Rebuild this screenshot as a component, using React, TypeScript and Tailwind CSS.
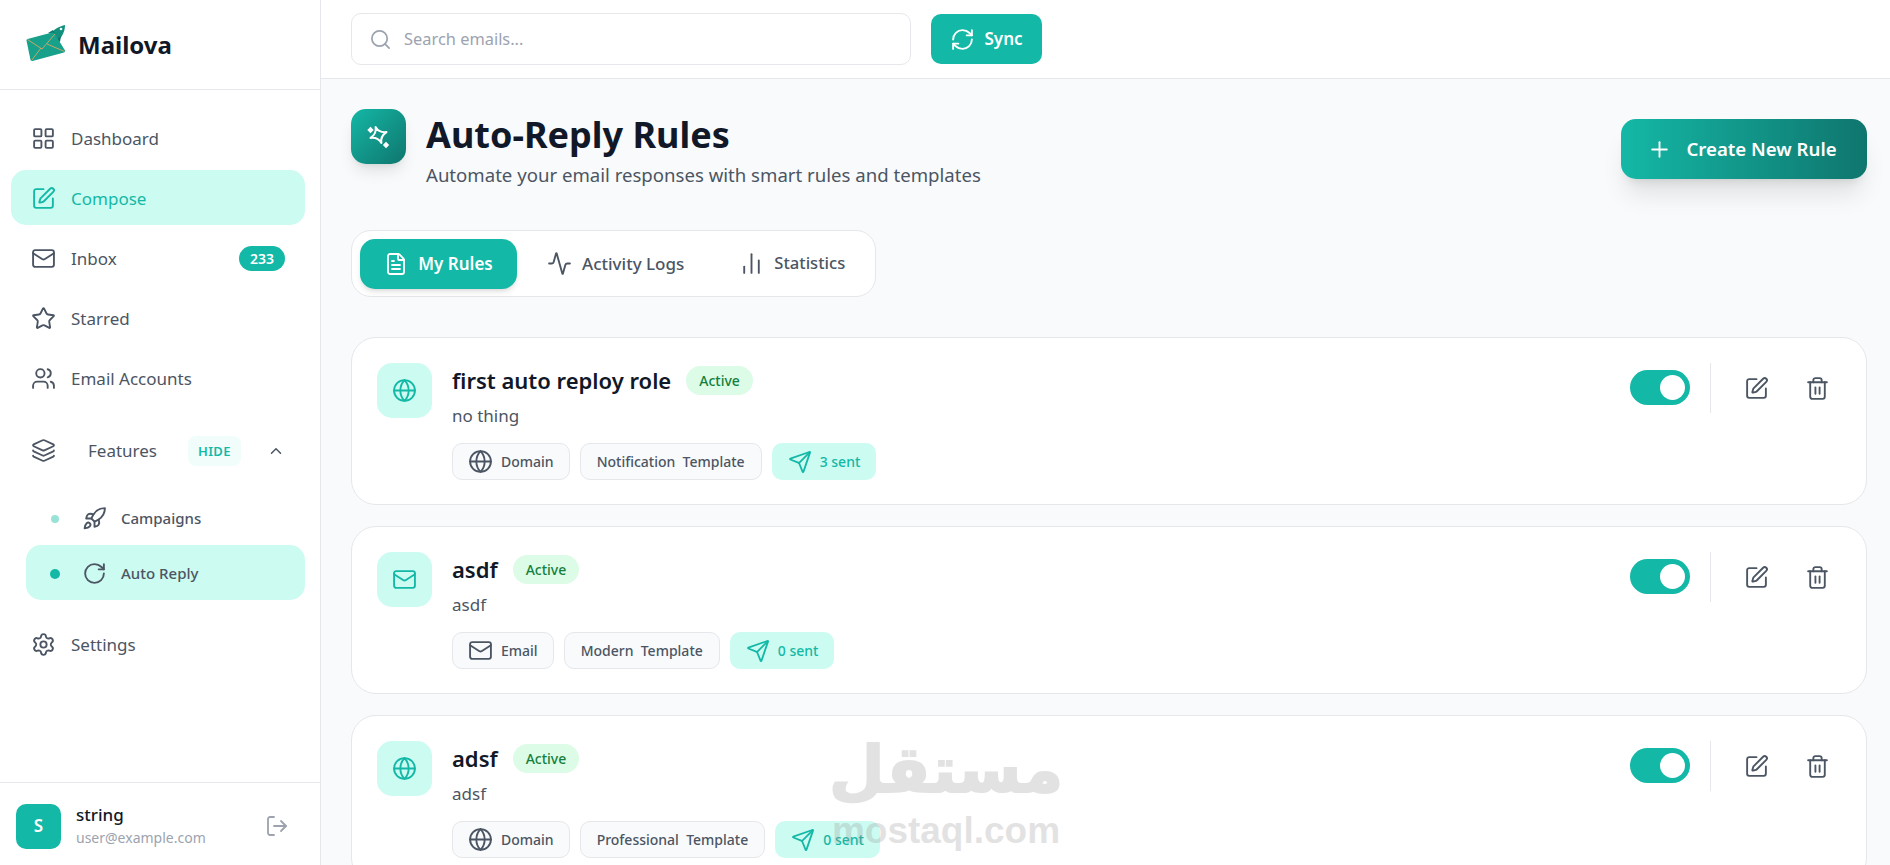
import {
  Activity,
  ChartNoAxesColumn,
  ChevronUp,
  FileText,
  Globe,
  Layers,
  LayoutGrid,
  LogOut,
  Mail,
  Plus,
  RefreshCw,
  Rocket,
  RotateCw,
  Search,
  Send,
  Settings,
  SquarePen,
  Star,
  Trash2,
  Users,
} from "lucide-react";

const rules = [
  { name: "first auto reploy role", desc: "no thing", type: "Domain", template: "Notification  Template", sent: "3 sent", Icon: Globe },
  { name: "asdf", desc: "asdf", type: "Email", template: "Modern  Template", sent: "0 sent", Icon: Mail },
  { name: "adsf", desc: "adsf", type: "Domain", template: "Professional  Template", sent: "0 sent", Icon: Globe },
];

function Logo() {
  return (
    <svg width="42" height="38" viewBox="0 0 42 38" className="-mt-[4px] shrink-0">
      {/* rocket behind the envelope */}
      <path d="M25 10 C29 5 35 2 40 1 C40 6 38 12 33 17 Z" fill="#128f7d" />
      <path d="M23 9 L28 6 L30 10 Z M31 16 L36 12 L35 18 Z" fill="#0f766e" />
      <circle cx="36" cy="5" r="1.300" fill="#e8fff9" />
      {/* envelope */}
      <path d="M2.500 15 L27 8.500 Q28.500 8.200 29.500 9.500 L40 26.500 Q40.500 28 39 28.500 L7.500 37 Q6 37.400 5.500 36 L1.500 16.500 Q1.400 15.400 2.500 15 Z" fill="#17a08a" />
      <path d="M2.500 15.500 L17 25 L30 10" fill="none" stroke="#d9a766" strokeWidth="0.900" />
      <path d="M6.500 36.500 L16 24 M39.500 27.500 L22 20" fill="none" stroke="#d9a766" strokeWidth="0.900" />
    </svg>
  );
}

function SparkIcon() {
  return (
    <svg width="24" height="24" viewBox="0 0 24 24" className="text-white">
      <path
        d="M11.500 1.500 C12.300 6.500 14.500 8.700 20 10 C14.500 11.300 12.300 13.500 11.500 18.500 C10.700 13.500 8.500 11.300 3 10 C8.500 8.700 10.700 6.500 11.500 1.500 Z"
        fill="none"
        stroke="currentColor"
        strokeWidth="2"
        strokeLinejoin="round"
        transform="rotate(-20 11.500 10)"
      />
      <path d="M3.500 1.800 L6.700 5 L3.500 8.200 L0.300 5 Z" fill="currentColor" />
      <path d="M19 16.800 L22.200 20 L19 23.200 L15.800 20 Z" fill="currentColor" />
    </svg>
  );
}

function NavItem({ Icon, label, active, badge }: { Icon: typeof Mail; label: string; active?: boolean; badge?: string }) {
  return (
    <div
      className={`flex h-[55px] items-center gap-[15px] rounded-[15px] pl-[20px] pr-[20px] pt-[2px] text-[17px] ${
        active ? "bg-[#ccfbf1] text-[#14b8a6]" : "text-[#4b5563]"
      }`}
    >
      <Icon size={25} strokeWidth={1.800} className="shrink-0" />
      <span className="flex-1 leading-none">{label}</span>
      {badge && (
        <span className="rounded-full bg-[#14b8a6] px-[11px] py-[3px] text-[14px] font-semibold leading-[19px] text-white">
          {badge}
        </span>
      )}
    </div>
  );
}

function Sidebar() {
  return (
    <aside className="flex h-full w-[321px] shrink-0 flex-col border-r border-[#e5e7eb] bg-white">
      <div className="flex h-[90px] shrink-0 items-center gap-[11px] border-b border-[#e5e7eb] pl-[25px] pt-[1px]">
        <Logo />
        <span className="text-[24px] font-bold text-[#111827]">Mailova</span>
      </div>
      <nav className="flex flex-1 flex-col gap-[5px] pl-[11px] pr-[15px] pt-[20px]">
        <NavItem Icon={LayoutGrid} label="Dashboard" />
        <NavItem Icon={SquarePen} label="Compose" active />
        <NavItem Icon={Mail} label="Inbox" badge="233" />
        <NavItem Icon={Star} label="Starred" />
        <NavItem Icon={Users} label="Email Accounts" />
        <div className="mt-[13px] flex h-[55px] items-center pl-[20px] text-[17px] text-[#4b5563]">
          <Layers size={25} strokeWidth={1.800} className="shrink-0" />
          <span className="ml-[32px] w-[100px]">Features</span>
          <span className="rounded-[8px] bg-[#f0fdfa] px-[10px] py-[4px] text-[13px] font-semibold leading-[22px] tracking-wide text-[#14b8a6]">
            HIDE
          </span>
          <ChevronUp size={18} strokeWidth={2} className="ml-[26px]" />
        </div>
        <div className="mt-[7px] ml-[15px] flex flex-col gap-0">
          <div className="flex h-[55px] items-center pl-[25px] pt-[2px] text-[15px] font-medium text-[#4b5563]">
            <span className="h-[8px] w-[8px] shrink-0 rounded-full bg-[#99e3d6]" />
            <Rocket size={25} strokeWidth={1.800} className="ml-[23px] shrink-0" />
            <span className="ml-[14px]">Campaigns</span>
          </div>
          <div className="flex h-[55px] items-center rounded-[15px] bg-[#ccfbf1] pl-[24px] pt-[2px] text-[15px] font-medium text-[#4b5563]">
            <span className="h-[10px] w-[10px] shrink-0 rounded-full bg-[#14b8a6]" />
            <RotateCw size={25} strokeWidth={1.800} className="ml-[22px] shrink-0" />
            <span className="ml-[14px]">Auto Reply</span>
          </div>
        </div>
        <div className="mt-[11px]">
          <NavItem Icon={Settings} label="Settings" />
        </div>
      </nav>
      <div className="flex h-[83px] shrink-0 items-center border-t border-[#e5e7eb] pl-[16px] pr-[31px] pt-[4px]">
        <div className="flex h-[45px] w-[45px] shrink-0 items-center justify-center rounded-[10px] bg-[#14b8a6] text-[17px] font-semibold text-white">
          S
        </div>
        <div className="ml-[15px] flex-1">
          <p className="text-[17px] font-medium leading-[22px] text-[#111827]">string</p>
          <p className="mt-[2px] text-[14px] leading-[20px] text-[#9ca3af]">user@example.com</p>
        </div>
        <LogOut size={24} strokeWidth={1.800} className="text-[#9ca3af]" />
      </div>
    </aside>
  );
}

function RuleCard({ rule }: { rule: (typeof rules)[number] }) {
  const { Icon } = rule;
  return (
    <div className="flex h-[168px] shrink-0 rounded-[25px] border border-[#e5e7eb] bg-white pl-[25px] pr-[24px] pt-[25px]">
      <div className="flex h-[55px] w-[55px] shrink-0 items-center justify-center rounded-[15px] bg-[#ccfbf1]">
        <Icon size={25} strokeWidth={1.800} className="text-[#14b8a6]" />
      </div>
      <div className="ml-[20px] flex-1">
        <div className="mt-[2px] flex h-[30px] items-center gap-[15px]">
          <h3 className="text-[22px] font-semibold leading-none text-[#111827]">{rule.name}</h3>
          <span className="rounded-full bg-[#dcfce7] px-[13px] py-[4px] text-[14px] font-medium leading-[21px] text-[#15803d]">
            Active
          </span>
        </div>
        <p className="mt-[9px] text-[17px] leading-[24px] text-[#4b5563]">{rule.desc}</p>
        <div className="mt-[15px] flex gap-[10px]">
          <span className="flex h-[37px] items-center gap-[8px] rounded-[10px] border border-[#e5e7eb] bg-[#f9fafb] px-[15px] text-[14px] font-medium text-[#4b5563]">
            <Icon size={25} strokeWidth={1.800} />
            {rule.type}
          </span>
          <span className="flex h-[37px] items-center whitespace-pre rounded-[10px] border border-[#e5e7eb] bg-[#f9fafb] px-[16px] text-[14px] font-medium text-[#4b5563]">
            {rule.template}
          </span>
          <span className="flex h-[37px] items-center gap-[8px] rounded-[10px] bg-[#ccfbf1] px-[16px] text-[14px] font-medium text-[#14b8a6]">
            <Send size={24} strokeWidth={1.800} />
            {rule.sent}
          </span>
        </div>
      </div>
      <div className="flex h-[50px] items-center">
        <div className="-mt-[2px] flex h-[35px] w-[60px] items-center justify-end rounded-full bg-[#14b8a6] pr-[5px]">
          <span className="h-[25px] w-[25px] rounded-full bg-white" />
        </div>
        <div className="ml-[20px] h-[50px] w-px bg-[#e5e7eb]" />
        <SquarePen size={25} strokeWidth={1.800} className="ml-[33px] text-[#4b5563]" />
        <Trash2 size={25} strokeWidth={1.800} className="ml-[36px] mr-[12px] text-[#4b5563]" />
      </div>
    </div>
  );
}

export default function App() {
  return (
    <div className="relative flex h-[865px] w-[1890px] overflow-hidden bg-[#f9fafb] font-['Noto_Sans',sans-serif]">
      <Sidebar />
      <main className="flex min-w-0 flex-1 flex-col">
        <header className="flex h-[79px] shrink-0 items-center gap-[20px] border-b border-[#e5e7eb] bg-white pl-[30px]">
          <div className="flex h-[52px] w-[560px] items-center gap-[12px] rounded-[10px] border border-[#e5e7eb] bg-white pl-[17px]">
            <Search size={23} strokeWidth={1.800} className="text-[#9ca3af]" />
            <span className="text-[16.400px] text-[#9ca3af]">Search emails...</span>
          </div>
          <button className="flex h-[50px] w-[111px] items-center justify-center gap-[9px] rounded-[10px] bg-[#14b8a6] text-[17px] font-semibold text-white">
            <RefreshCw size={25} strokeWidth={1.800} />
            Sync
          </button>
        </header>
        <div className="flex min-h-0 flex-1 flex-col overflow-hidden pl-[30px] pr-[23px] pt-[30px]">
          <div className="flex shrink-0 items-start justify-between">
            <div className="flex gap-[20px]">
              <div className="flex h-[55px] w-[55px] items-center justify-center rounded-[15px] bg-gradient-to-br from-[#14b8a6] to-[#0f766e] shadow-lg">
                <SparkIcon />
              </div>
              <div className="pt-[2px] pb-[1px]">
                <h1 className="text-[36px] font-bold leading-[48px] text-[#111827]">Auto-Reply Rules</h1>
                <p className="mt-[3px] text-[18.600px] leading-[26px] text-[#4b5563]">
                  Automate your email responses with smart rules and templates
                </p>
              </div>
            </div>
            <button className="mt-[10px] flex h-[60px] w-[246px] items-center justify-center gap-[14px] rounded-[15px] bg-gradient-to-r from-[#14b8a6] to-[#0f766e] pr-[4px] text-[18.600px] font-semibold text-white shadow-xl">
              <Plus size={25} strokeWidth={1.800} />
              Create New Rule
            </button>
          </div>
          <div className="mt-[41px] flex h-[67px] w-[525px] shrink-0 items-center rounded-[20px] border border-[#e5e7eb] bg-white pl-[8px]">
            <div className="flex h-[50px] w-[157px] items-center justify-center gap-[10px] rounded-[15px] bg-[#14b8a6] text-[17px] font-semibold text-white shadow-md">
              <FileText size={24} strokeWidth={1.800} />
              My Rules
            </div>
            <div className="ml-[15px] flex h-[50px] items-center gap-[10px] px-[15px] text-[17px] font-medium text-[#4b5563]">
              <Activity size={25} strokeWidth={1.800} />
              Activity Logs
            </div>
            <div className="ml-[25px] flex h-[50px] items-center gap-[10px] px-[15px] text-[16.600px] font-medium text-[#4b5563]">
              <ChartNoAxesColumn size={25} strokeWidth={1.800} />
              Statistics
            </div>
          </div>
          <div className="mt-[40px] flex flex-col gap-[21px]">
            {rules.map((rule) => (
              <RuleCard key={rule.name} rule={rule} />
            ))}
          </div>
        </div>
      </main>
      {/* site watermark */}
      <div className="pointer-events-none absolute left-[826px] top-[727px] flex w-[240px] flex-col items-center text-[#8f8f8f] opacity-25">
        <span className="font-['DejaVu_Sans',sans-serif] text-[64px] font-bold leading-[86px] [-webkit-text-stroke:2px_#8f8f8f]">مستقل</span>
        <span className="font-['Liberation_Sans',sans-serif] text-[37px] font-bold leading-[36px]">mostaql.com</span>
      </div>
    </div>
  );
}
